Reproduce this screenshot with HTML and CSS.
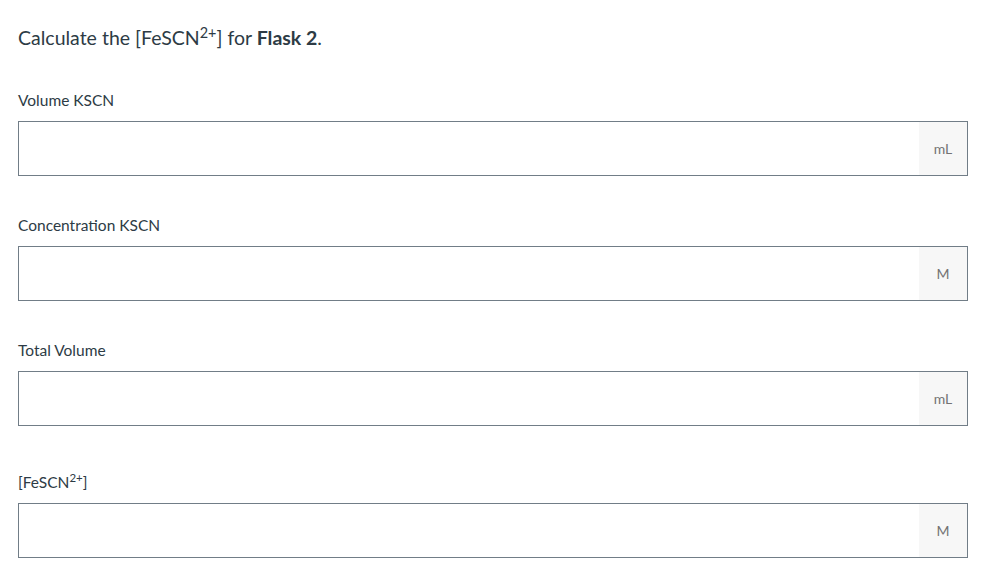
FILE: index.html
```html
<!DOCTYPE html>
<html>
<head>
<meta charset="utf-8">
<link rel="stylesheet" href="styles.css">
</head>
<body>
<div class="page">
  <p class="prompt">Calculate the [FeSCN<sup>2+</sup>] for <strong>Flask 2</strong>.</p>

  <div class="field">
    <label class="label">Volume KSCN</label>
    <div class="input-group">
      <input class="input" type="text">
      <span class="addon">mL</span>
    </div>
  </div>

  <div class="field">
    <label class="label">Concentration KSCN</label>
    <div class="input-group">
      <input class="input" type="text">
      <span class="addon">M</span>
    </div>
  </div>

  <div class="field">
    <label class="label">Total Volume</label>
    <div class="input-group">
      <input class="input" type="text">
      <span class="addon">mL</span>
    </div>
  </div>

  <div class="field field-tall">
    <label class="label">[FeSCN<sup>2+</sup>]</label>
    <div class="input-group">
      <input class="input" type="text">
      <span class="addon">M</span>
    </div>
  </div>
</div>
</body>
</html>
```

FILE: styles.css
```css
html, body {
  margin: 0;
  padding: 0;
  background: #ffffff;
}

body {
  font-family: "Source Sans Pro", Lato, "Open Sans", sans-serif;
  color: #2d3b45;
}

.page {
  width: 950px;
  padding: 26px 0 0 18px;
  display: flex;
  flex-direction: column;
}

.prompt {
  margin: 0 0 38px 0;
  font-size: 19.5px;
  line-height: 24px;
  color: #2d3b45;
}

.prompt sup {
  font-size: 0.74em;
  line-height: 0;
  vertical-align: 0.5em;
}

.prompt strong {
  font-weight: 700;
}

.field {
  display: flex;
  flex-direction: column;
  margin-bottom: 37px;
}

.label {
  font-size: 15.5px;
  line-height: 24px;
  color: #2d3b45;
  margin-bottom: 9px;
}

.label sup {
  font-size: 0.74em;
  line-height: 0;
  vertical-align: 0.5em;
}

.field-tall .label {
  padding-top: 7px;
}

.input-group {
  display: flex;
  height: 55px;
  box-sizing: border-box;
  border: 1px solid #717d87;
  background: #ffffff;
}

.input {
  flex: 1;
  border: 0;
  outline: 0;
  margin: 0;
  padding: 0 12px;
  font: inherit;
  background: transparent;
}

.addon {
  width: 48px;
  display: flex;
  align-items: center;
  justify-content: center;
  background: #f7f7f7;
  color: #737373;
  font-size: 14px;
}
```
